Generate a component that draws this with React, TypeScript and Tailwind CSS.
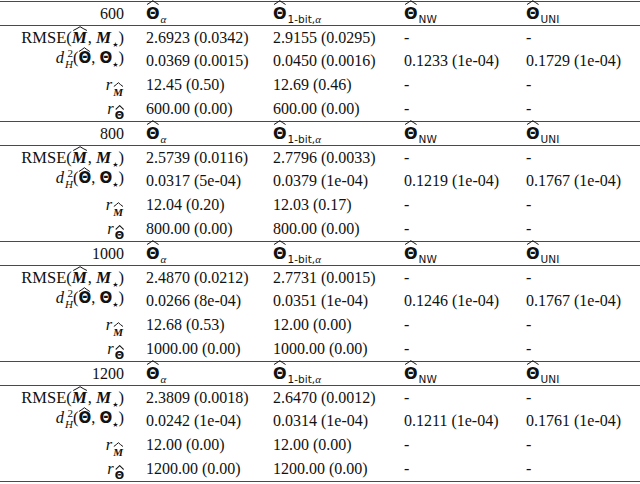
import React from 'react';

type Block = {
  n: string;
  rmse: string[];
  d: string[];
  rM: string[];
  rT: string[];
};

const blocks: Block[] = [
  {
    n: '600',
    rmse: ['2.6923 (0.0342)', '2.9155 (0.0295)', '-', '-'],
    d: ['0.0369 (0.0015)', '0.0450 (0.0016)', '0.1233 (1e-04)', '0.1729 (1e-04)'],
    rM: ['12.45 (0.50)', '12.69 (0.46)', '-', '-'],
    rT: ['600.00 (0.00)', '600.00 (0.00)', '-', '-'],
  },
  {
    n: '800',
    rmse: ['2.5739 (0.0116)', '2.7796 (0.0033)', '-', '-'],
    d: ['0.0317 (5e-04)', '0.0379 (1e-04)', '0.1219 (1e-04)', '0.1767 (1e-04)'],
    rM: ['12.04 (0.20)', '12.03 (0.17)', '-', '-'],
    rT: ['800.00 (0.00)', '800.00 (0.00)', '-', '-'],
  },
  {
    n: '1000',
    rmse: ['2.4870 (0.0212)', '2.7731 (0.0015)', '-', '-'],
    d: ['0.0266 (8e-04)', '0.0351 (1e-04)', '0.1246 (1e-04)', '0.1767 (1e-04)'],
    rM: ['12.68 (0.53)', '12.00 (0.00)', '-', '-'],
    rT: ['1000.00 (0.00)', '1000.00 (0.00)', '-', '-'],
  },
  {
    n: '1200',
    rmse: ['2.3809 (0.0018)', '2.6470 (0.0012)', '-', '-'],
    d: ['0.0242 (1e-04)', '0.0314 (1e-04)', '0.1211 (1e-04)', '0.1761 (1e-04)'],
    rM: ['12.00 (0.00)', '12.00 (0.00)', '-', '-'],
    rT: ['1200.00 (0.00)', '1200.00 (0.00)', '-', '-'],
  },
];

// wide hat drawn over its child
const Hat = ({
  children,
  top,
  size = 'text-[16px]',
}: {
  children: React.ReactNode;
  top: string;
  size?: string;
}) => (
  <span className={`relative inline-block leading-none ${size}`}>
    {children}
    <svg
      className={`absolute left-0 w-full h-[5px] ${top}`}
      viewBox="0 0 20 5"
      preserveAspectRatio="none"
    >
      <path
        d="M1.5 4.5 Q6.5 2.5 10 0.7 Q13.5 2.5 18.5 4.5"
        fill="none"
        stroke="currentColor"
        strokeWidth="1"
        vectorEffect="non-scaling-stroke"
      />
    </svg>
  </span>
);

const Theta = () => <span className="font-['DejaVu_Sans'] font-bold">Θ</span>;

const BM = () => <span className="font-bold italic pr-[1px]">M</span>;

const Star = () => (
  <span className="relative top-[4px] font-['DejaVu_Sans'] text-[7px] leading-none">★</span>
);

const HeadTheta = ({ sub }: { sub: React.ReactNode }) => (
  <span className="inline-flex items-baseline">
    <Hat top="-top-[6px]">
      <Theta />
    </Hat>
    <span className="relative top-[4px] ml-[1px] text-[11px] leading-none">{sub}</span>
  </span>
);

const sans = "font-['DejaVu_Sans'] text-[10.5px]";

const heads = [
  <HeadTheta key="a" sub={<span className="italic">α</span>} />,
  <HeadTheta
    key="b"
    sub={
      <span>
        <span className={sans}>1-bit,</span>
        <span className="italic">α</span>
      </span>
    }
  />,
  <HeadTheta key="c" sub={<span className={sans}>NW</span>} />,
  <HeadTheta key="d" sub={<span className={sans}>UNI</span>} />,
];

const labelRmse = (
  <span className="inline-flex items-baseline text-[16.5px]">
    RMSE(
    <Hat top="-top-[3px]" size="text-[17px]">
      <BM />
    </Hat>
    ,&nbsp;
    <span className="text-[17px]">
      <BM />
    </span>
    <Star />)
  </span>
);

const labelD = (
  <span className="inline-flex items-baseline text-[16.5px]">
    <span className="italic">d</span>
    <span className="relative -top-[6px] inline-flex flex-col text-[11px] leading-[11px] ml-[1px]">
      <span>2</span>
      <span className="italic">H</span>
    </span>
    (
    <Hat top="-top-[4px]" size="text-[15px]">
      <Theta />
    </Hat>
    ,&nbsp;
    <span className="text-[15px]">
      <Theta />
    </span>
    <Star />)
  </span>
);

const labelRM = (
  <span className="inline-flex items-baseline text-[16.5px]">
    <span className="italic">r</span>
    <span className="relative top-[6px] ml-[1px]">
      <Hat top="-top-[5px]" size="text-[11px]">
        <BM />
      </Hat>
    </span>
  </span>
);

const labelRT = (
  <span className="inline-flex items-baseline text-[16.5px]">
    <span className="italic">r</span>
    <span className="relative top-[5px] ml-[1px]">
      <Hat top="-top-[5px]" size="text-[11px]">
        <Theta />
      </Hat>
    </span>
  </span>
);

const Row = ({
  label,
  cells,
  line,
}: {
  label: React.ReactNode;
  cells: React.ReactNode[];
  line?: boolean;
}) => (
  <div
    className={`flex items-center h-[24px] ${line ? 'border-t border-[#4a4a4a]' : ''}`}
  >
    <div className="w-[124px] shrink-0 text-right">{label}</div>
    <div className="w-[22px] shrink-0" />
    <div className="w-[127px] shrink-0">{cells[0]}</div>
    <div className="w-[131px] shrink-0">{cells[1]}</div>
    <div className="w-[122px] shrink-0">{cells[2]}</div>
    <div className="flex-1">{cells[3]}</div>
  </div>
);

export default function App() {
  return (
    <div className="w-[640px] h-[484px] bg-white text-[#111] font-['Liberation_Serif',serif] text-[16px] pt-[1px]">
      {blocks.map((b) => (
        <div key={b.n}>
          <Row line label={b.n} cells={heads} />
          <Row line label={labelRmse} cells={b.rmse} />
          <Row label={labelD} cells={b.d} />
          <Row label={labelRM} cells={b.rM} />
          <Row label={labelRT} cells={b.rT} />
        </div>
      ))}
      <div className="border-t border-[#4a4a4a]" />
    </div>
  );
}
